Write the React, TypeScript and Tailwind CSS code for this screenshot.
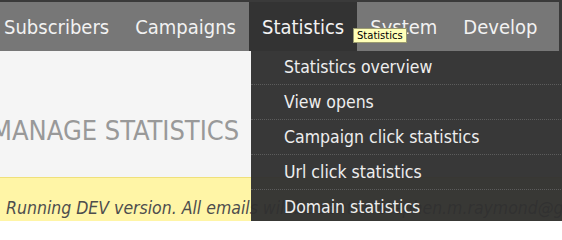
import React from 'react';

const navItems = ['Subscribers', 'Campaigns', 'Statistics', 'System', 'Develop'];

const statsMenu = [
  'Statistics overview',
  'View opens',
  'Campaign click statistics',
  'Url click statistics',
  'Domain statistics',
];

const App: React.FC = () => {
  return (
    <div className="relative w-[562px] h-[221px] overflow-hidden bg-[#f5f5f5] font-['DejaVu_Sans_Condensed','DejaVu_Sans',sans-serif]">
      {/* Top navigation */}
      <header className="bg-[#3a3a3a] pt-[2px]">
        <nav className="flex h-[49px] bg-[#777777] mr-[3px]">
          <ul className="flex -ml-[9px]">
            {navItems.map(item => (
              <li
                key={item}
                className={
                  item === 'Statistics'
                    ? 'flex items-center px-[13px] text-[20px] text-[#f2f2f2] bg-[#333333]'
                    : 'flex items-center px-[13px] text-[20px] text-[#f2f2f2]'
                }
              >
                {item}
              </li>
            ))}
          </ul>
        </nav>
      </header>

      {/* Page heading */}
      <div className="h-[126px] pt-[66px]">
        <h1 className="-ml-[9px] text-[27px] leading-none text-[#999999] whitespace-nowrap">
          MANAGE STATISTICS
        </h1>
      </div>

      {/* Dev notice */}
      <div className="h-[60px] border-t border-[#efe07a] bg-[#fff5a6] pl-[6px] pt-[17px]">
        <p className="italic text-[17.5px] leading-[26px] text-[#4d4d4d] whitespace-nowrap">
          Running DEV version. All emails will be sent to stephen.m.raymond@gmail.com
        </p>
      </div>

      {/* Statistics dropdown */}
      <ul className="absolute top-[51px] left-[251px] w-[320px] bg-[#303030]/[0.96] text-[17.5px] text-[#eeeeee]">
        {statsMenu.map((entry, i) => (
          <li
            key={entry}
            className={
              i === 0
                ? 'flex items-center h-[33px] pl-[33px] whitespace-nowrap'
                : 'flex items-center h-[35px] pl-[33px] whitespace-nowrap border-t border-dotted border-[#5c5c5c]'
            }
          >
            {entry}
          </li>
        ))}
      </ul>

      {/* Tooltip */}
      <div className="absolute top-[28px] left-[353px] h-[15px] px-[3px] flex items-center bg-[#ffffb8] border border-[#9a9a70] text-[10px] leading-none text-black font-['DejaVu_Sans',sans-serif]">
        Statistics
      </div>
    </div>
  );
};

export default App;
